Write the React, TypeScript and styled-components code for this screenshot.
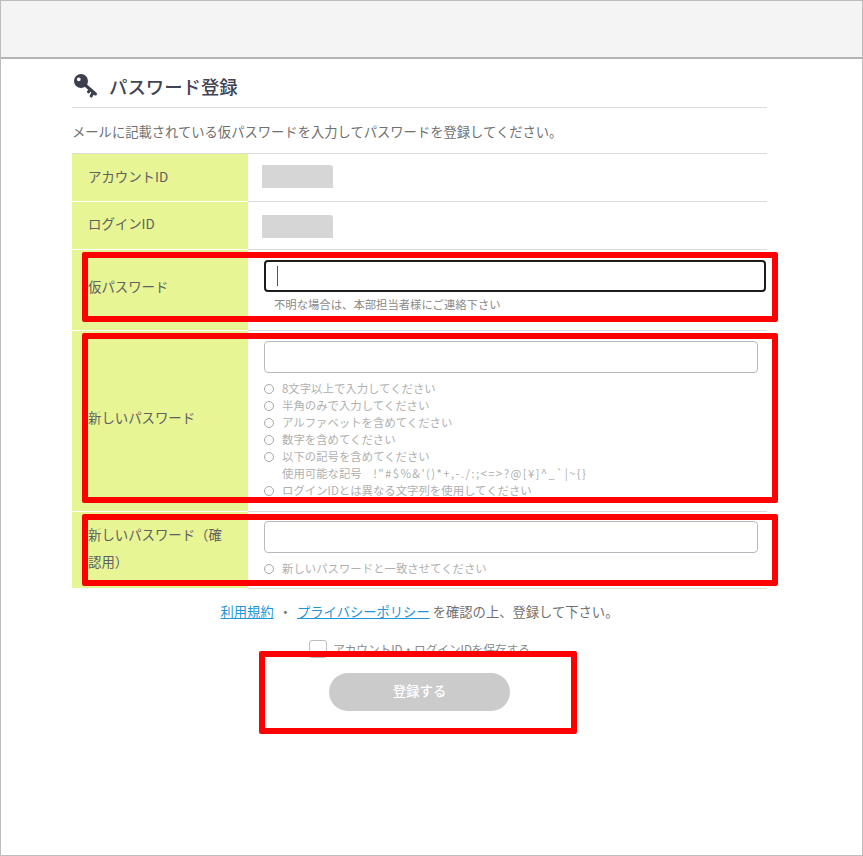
import React from "react";
import styled, { createGlobalStyle } from "styled-components";

const Global = createGlobalStyle`
  html, body { margin: 0; padding: 0; background: #fff; }
  body { font-family: "Noto Sans CJK JP", "Noto Sans", sans-serif; color: #666; }
`;

const Frame = styled.div`
  position: relative;
  box-sizing: border-box;
  width: 863px;
  height: 856px;
  border: 1px solid #bdbdbd;
  overflow: hidden;
`;
const TopBar = styled.header`
  height: 56px;
  background: #f4f4f4;
  border-bottom: 2px solid #b4b4b8;
`;
const Main = styled.main`
  width: 695px;
  margin-left: 71px;
`;
const Title = styled.h1`
  display: flex;
  align-items: center;
  gap: 10px;
  height: 49px;
  margin: 0;
  box-sizing: border-box;
  padding: 6px 0 0 1px;
  border-bottom: 1px solid #dcdcdc;
  font-size: 18.4px;
  font-weight: 500;
  color: #3f4353;
`;
const Intro = styled.p`
  height: 45px;
  line-height: 48px;
  margin: 0;
  font-size: 13.3px;
  color: #707070;
  border-bottom: 1px solid #dcdcdc;
  box-sizing: content-box;
`;
const Row = styled.div<{ $h: number }>`
  display: grid;
  grid-template-columns: 176px 1fr;
  height: ${(p) => p.$h}px;
  border-bottom: 1px solid #dcdcdc;
`;
const Head = styled.div<{ $lift?: number }>`
  display: flex;
  align-items: center;
  padding: 0 20px ${(p) => p.$lift ?? 0}px 16px;
  background: #e7f595;
  font-size: 13.4px;
  line-height: 27px;
  color: #606060;
  border-bottom: 1px solid #fff;
  margin-bottom: -1px;
`;
const Cell = styled.div<{ $top?: number }>`
  padding: ${(p) => p.$top ?? 0}px 0 0 16px;
  display: flex;
  flex-direction: column;
  align-items: flex-start;
`;
const Masked = styled.div`
  width: 71px;
  height: 23px;
  margin-left: -2px;
  background: #d6d6d6;
  border-top-right-radius: 3px;
`;
const Input = styled.div<{ $focus?: boolean }>`
  box-sizing: border-box;
  width: ${(p) => (p.$focus ? 502 : 494)}px;
  height: 32px;
  flex: none;
  border-radius: 4px;
  border: ${(p) => (p.$focus ? "2px solid #1c1c1c" : "1px solid #b9b9c2")};
  padding: 4px 0 0 11px;
`;
const Caret = styled.div`
  width: 1px;
  height: 20px;
  background: #555;
`;
const Note = styled.div`
  margin: 3px 0 0 10px;
  font-size: 11.35px;
  line-height: 18px;
  color: #8a8a8a;
`;
const Rules = styled.ul`
  list-style: none;
  margin: 7px 0 0;
  padding: 0;
`;
const Rule = styled.li`
  display: flex;
  align-items: flex-start;
  gap: 8px;
  font-size: 11.4px;
  line-height: 17px;
  color: #b0b0b0;
`;
const RuleText = styled.span`
  display: block;
`;
const Symbols = styled.span`
  display: block;
  white-space: pre;
`;
const SymbolChars = styled.span`
  letter-spacing: 1.4px;
`;
const Dot = styled.span`
  flex: none;
  box-sizing: border-box;
  width: 10px;
  height: 10px;
  margin-top: 4px;
  border: 1px solid #a8a8a8;
  border-radius: 50%;
`;
const Agreement = styled.p`
  margin: 13px 0 0;
  text-align: center;
  font-size: 13.3px;
  line-height: 20px;
  color: #707070;
`;
const Link = styled.a`
  color: #1e95d8;
  text-decoration: underline;
`;
const Sep = styled.span`
  margin: 0 5px;
`;
const Save = styled.label`
  display: flex;
  justify-content: center;
  align-items: center;
  gap: 6px;
  margin-top: 18px;
  font-size: 11.6px;
  line-height: 18px;
  color: #8a8a8a;
`;
const Box = styled.span`
  box-sizing: border-box;
  width: 18px;
  height: 18px;
  border: 1px solid #bdbdbd;
  border-radius: 3px;
`;
const Submit = styled.button`
  display: block;
  width: 181px;
  height: 38px;
  margin: 15px auto 0;
  padding: 0 0 4px;
  border: none;
  border-radius: 19px;
  background: #cbcbcb;
  color: #fff;
  font: 500 13.4px "Noto Sans CJK JP", sans-serif;
`;
const Highlight = styled.div<{ $x: number; $y: number; $w: number; $h: number }>`
  position: absolute;
  left: ${(p) => p.$x}px;
  top: ${(p) => p.$y}px;
  width: ${(p) => p.$w}px;
  height: ${(p) => p.$h}px;
  box-sizing: border-box;
  border: 6px solid #fe0000;
  border-radius: 2px;
`;

const KeyIcon = () => (
  <svg width="26" height="26" viewBox="0 0 26 26" aria-hidden="true">
    <path
      fill="#3c3f50"
      fillRule="evenodd"
      d="M8 1a7 7 0 1 1 0 14A7 7 0 0 1 8 1Zm-2.2 3.4a1.9 1.9 0 1 0 0 3.8 1.9 1.9 0 0 0 0-3.8Z"
    />
    <path
      fill="none"
      stroke="#3c3f50"
      strokeWidth="3"
      strokeLinecap="round"
      d="M11 11l11.5 10M17 16.8l-1.5 2M20 19.5l-1.8 3.5"
    />
  </svg>
);

const passwordRules = [
  "8文字以上で入力してください",
  "半角のみで入力してください",
  "アルファベットを含めてください",
  "数字を含めてください",
];

export default function App() {
  return (
    <Frame>
      <Global />
      <TopBar />
      <Main>
        <Title>
          <KeyIcon />
          パスワード登録
        </Title>
        <Intro>メールに記載されている仮パスワードを入力してパスワードを登録してください。</Intro>
        <Row $h={47}>
          <Head $lift={2}>アカウントID</Head>
          <Cell $top={11}>
            <Masked />
          </Cell>
        </Row>
        <Row $h={47}>
          <Head $lift={4}>ログインID</Head>
          <Cell $top={13}>
            <Masked />
          </Cell>
        </Row>
        <Row $h={80}>
          <Head $lift={8}>仮パスワード</Head>
          <Cell $top={10}>
            <Input $focus>
              <Caret />
            </Input>
            <Note>不明な場合は、本部担当者様にご連絡下さい</Note>
          </Cell>
        </Row>
        <Row $h={180}>
          <Head $lift={8}>新しいパスワード</Head>
          <Cell $top={10}>
            <Input />
            <Rules>
              {passwordRules.map((t) => (
                <Rule key={t}>
                  <Dot />
                  {t}
                </Rule>
              ))}
              <Rule>
                <Dot />
                <RuleText>
                  以下の記号を含めてください
                  <Symbols>
                    使用可能な記号　<SymbolChars>{"!\"#$%&'()*+,-./:;<=>?@[¥]^_`|~{}"}</SymbolChars>
                  </Symbols>
                </RuleText>
              </Rule>
              <Rule>
                <Dot />
                ログインIDとは異なる文字列を使用してください
              </Rule>
            </Rules>
          </Cell>
        </Row>
        <Row $h={76}>
          <Head $lift={4}>新しいパスワード（確認用）</Head>
          <Cell $top={9}>
            <Input />
            <Rules>
              <Rule>
                <Dot />
                新しいパスワードと一致させてください
              </Rule>
            </Rules>
          </Cell>
        </Row>
        <Agreement>
          <Link>利用規約</Link>
          <Sep>・</Sep>
          <Link>プライバシーポリシー</Link> を確認の上、登録して下さい。
        </Agreement>
        <Save>
          <Box />
          アカウントID・ログインIDを保存する
        </Save>
        <Submit>登録する</Submit>
      </Main>
      <Highlight $x={81} $y={251} $w={696} $h={70} />
      <Highlight $x={81} $y={332} $w={696} $h={170} />
      <Highlight $x={81} $y={513} $w={696} $h={72} />
      <Highlight $x={258} $y={650} $w={318} $h={83} />
    </Frame>
  );
}
